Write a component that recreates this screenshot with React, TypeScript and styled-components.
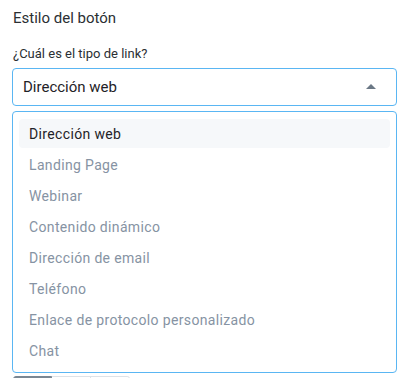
import { createGlobalStyle } from 'styled-components';
import styled from 'styled-components';

const GlobalStyle = createGlobalStyle`
  html, body {
    margin: 0;
    padding: 0;
    background: #fff;
    overflow: hidden;
  }
  body {
    font-family: Roboto, "Liberation Sans", Arial, sans-serif;
    -webkit-font-smoothing: antialiased;
  }
`;

const options = [
  "Dirección web",
  "Landing Page",
  "Webinar",
  "Contenido dinámico",
  "Dirección de email",
  "Teléfono",
  "Enlace de protocolo personalizado",
  "Chat",
];

const App = () => {
  const selected = "Dirección web";
  return (
    <>
      <GlobalStyle />
      <Panel>
        <Title>Estilo del botón</Title>
        <Label>¿Cuál es el tipo de link?</Label>
        <SelectBox>
          <span>{selected}</span>
          <Caret />
        </SelectBox>
        <Menu>
          {options.map((o) => (
            <Option key={o} active={o === selected}>
              {o}
            </Option>
          ))}
        </Menu>
        <Segmented>
          <Segment filled />
          <Segment />
          <Segment last />
        </Segmented>
      </Panel>
    </>
  );
};

export default App;

const Panel = styled.div`
  display: flex;
  flex-direction: column;
  padding: 8px 15px 0 12px;
  height: 378px;
  box-sizing: border-box;
  & > * {
    flex: none;
  }
`;

const Title = styled.div`
  font-size: 15px;
  color: #2b2f33;
  line-height: 20px;
  padding-left: 1px;
`;

const Label = styled.div`
  font-size: 13px;
  color: #2b2f33;
  line-height: 16px;
  margin-top: 18px;
  padding-left: 1px;
`;

const SelectBox = styled.div`
  margin-top: 6px;
  height: 38px;
  box-sizing: border-box;
  border: 1px solid #5ab6f3;
  border-radius: 4px;
  display: flex;
  align-items: center;
  justify-content: space-between;
  padding: 0 20px 0 10px;
  font-size: 15px;
  color: #1f2328;
`;

const Caret = styled.span`
  width: 0;
  height: 0;
  border-left: 5px solid transparent;
  border-right: 5px solid transparent;
  border-bottom: 5px solid #6b7885;
  margin-top: -1px;
`;

const Menu = styled.div`
  margin-top: 5px;
  height: 262px;
  box-sizing: border-box;
  border: 1px solid #5ab6f3;
  border-radius: 4px;
  padding: 7px 6px 4px;
  display: flex;
  flex-direction: column;
  gap: 2px;
`;

const Option = styled.div<{ active?: boolean }>`
  height: 29px;
  flex: none;
  display: flex;
  align-items: center;
  padding-left: 10px;
  border-radius: 4px;
  font-size: 14px;
  letter-spacing: 0.35px;
  color: ${(p) => (p.active ? "#1f2328" : "#8693a3")};
  background: ${(p) => (p.active ? "#f6f8fa" : "transparent")};
`;

const Segmented = styled.div`
  display: flex;
  margin-top: 3px;
  margin-left: 1px;
`;

const Segment = styled.div<{ filled?: boolean; last?: boolean }>`
  width: 39px;
  height: 20px;
  box-sizing: border-box;
  border: 1px solid ${(p) => (p.filled ? "#7a8793" : "#dde2e7")};
  border-left-width: ${(p) => (p.filled ? "1px" : "0")};
  background: ${(p) => (p.filled ? "#7a8793" : "#fff")};
  border-radius: ${(p) => (p.filled ? "3px 0 0 3px" : p.last ? "0 3px 3px 0" : "0")};
`;
